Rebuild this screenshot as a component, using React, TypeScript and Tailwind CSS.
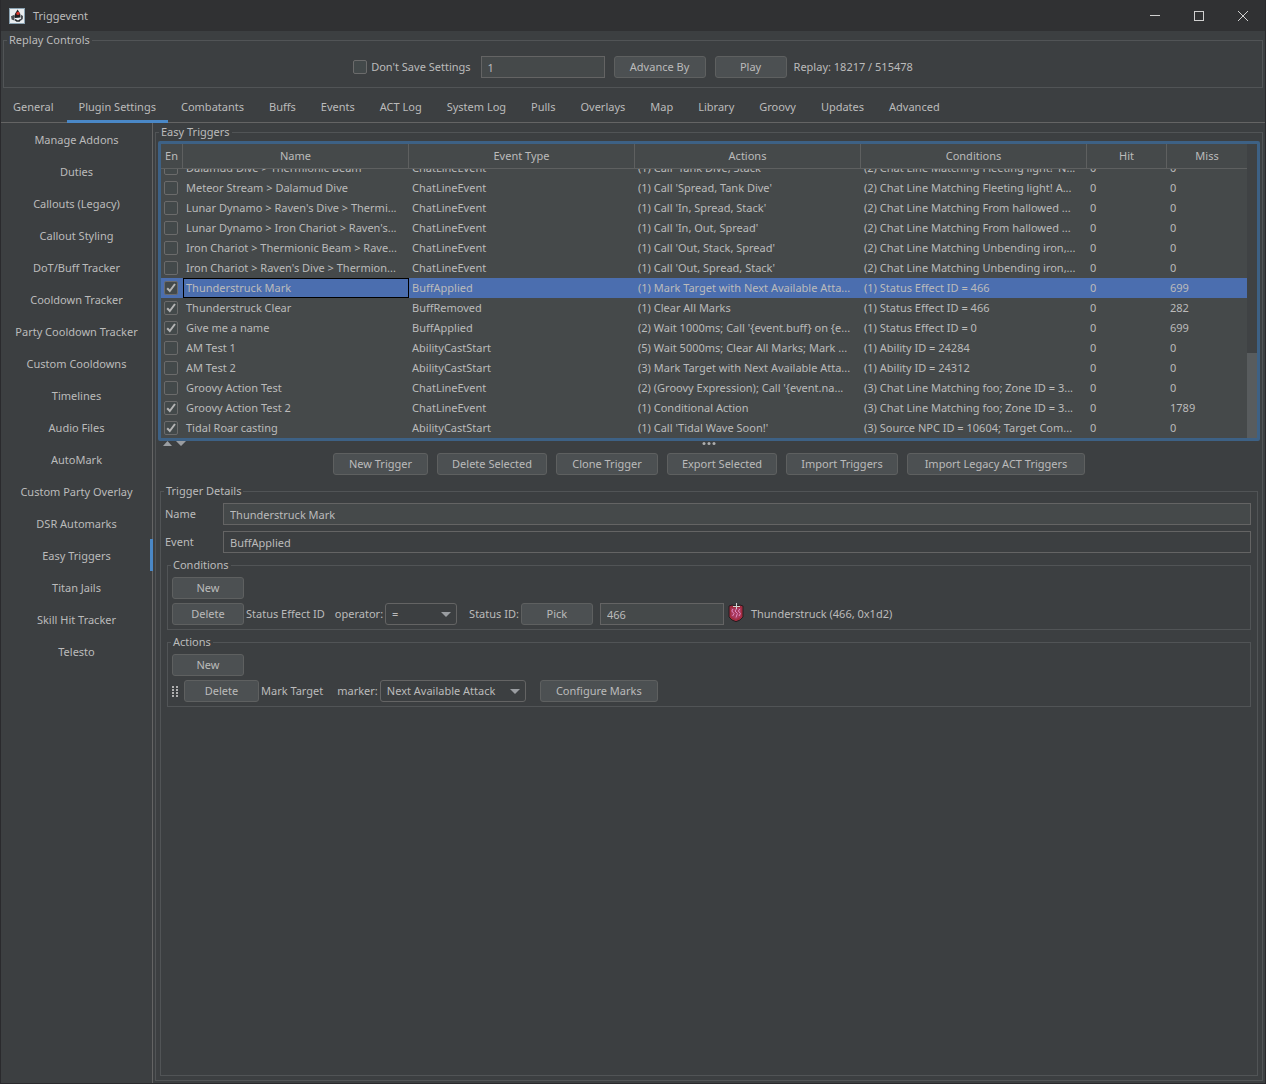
import { useState } from "react";
import type { ReactNode } from "react";
import clsx from "clsx";

interface Trigger {
  enabled: boolean;
  name: string;
  event: string;
  actions: string;
  conditions: string;
  hit: number;
  miss: number;
}

const TABS = [
  "General",
  "Plugin Settings",
  "Combatants",
  "Buffs",
  "Events",
  "ACT Log",
  "System Log",
  "Pulls",
  "Overlays",
  "Map",
  "Library",
  "Groovy",
  "Updates",
  "Advanced",
];

const PAGES = [
  "Manage Addons",
  "Duties",
  "Callouts (Legacy)",
  "Callout Styling",
  "DoT/Buff Tracker",
  "Cooldown Tracker",
  "Party Cooldown Tracker",
  "Custom Cooldowns",
  "Timelines",
  "Audio Files",
  "AutoMark",
  "Custom Party Overlay",
  "DSR Automarks",
  "Easy Triggers",
  "Titan Jails",
  "Skill Hit Tracker",
  "Telesto",
];

const TRIGGERS: Trigger[] = [
  { enabled: false, name: "Dalamud Dive > Thermionic Beam", event: "ChatLineEvent", actions: "(1) Call 'Tank Dive, Stack'", conditions: "(2) Chat Line Matching Fleeting light! 'N...", hit: 0, miss: 0 },
  { enabled: false, name: "Meteor Stream > Dalamud Dive", event: "ChatLineEvent", actions: "(1) Call 'Spread, Tank Dive'", conditions: "(2) Chat Line Matching Fleeting light! A...", hit: 0, miss: 0 },
  { enabled: false, name: "Lunar Dynamo > Raven's Dive > Thermi...", event: "ChatLineEvent", actions: "(1) Call 'In, Spread, Stack'", conditions: "(2) Chat Line Matching From hallowed ...", hit: 0, miss: 0 },
  { enabled: false, name: "Lunar Dynamo > Iron Chariot > Raven's...", event: "ChatLineEvent", actions: "(1) Call 'In, Out, Spread'", conditions: "(2) Chat Line Matching From hallowed ...", hit: 0, miss: 0 },
  { enabled: false, name: "Iron Chariot > Thermionic Beam > Rave...", event: "ChatLineEvent", actions: "(1) Call 'Out, Stack, Spread'", conditions: "(2) Chat Line Matching Unbending iron,...", hit: 0, miss: 0 },
  { enabled: false, name: "Iron Chariot > Raven's Dive > Thermion...", event: "ChatLineEvent", actions: "(1) Call 'Out, Spread, Stack'", conditions: "(2) Chat Line Matching Unbending iron,...", hit: 0, miss: 0 },
  { enabled: true, name: "Thunderstruck Mark", event: "BuffApplied", actions: "(1) Mark Target with Next Available Atta...", conditions: "(1) Status Effect ID = 466", hit: 0, miss: 699 },
  { enabled: true, name: "Thunderstruck Clear", event: "BuffRemoved", actions: "(1) Clear All Marks", conditions: "(1) Status Effect ID = 466", hit: 0, miss: 282 },
  { enabled: true, name: "Give me a name", event: "BuffApplied", actions: "(2) Wait 1000ms; Call '{event.buff} on {e...", conditions: "(1) Status Effect ID = 0", hit: 0, miss: 699 },
  { enabled: false, name: "AM Test 1", event: "AbilityCastStart", actions: "(5) Wait 5000ms; Clear All Marks; Mark ...", conditions: "(1) Ability ID = 24284", hit: 0, miss: 0 },
  { enabled: false, name: "AM Test 2", event: "AbilityCastStart", actions: "(3) Mark Target with Next Available Atta...", conditions: "(1) Ability ID = 24312", hit: 0, miss: 0 },
  { enabled: false, name: "Groovy Action Test", event: "ChatLineEvent", actions: "(2) (Groovy Expression); Call '{event.na...", conditions: "(3) Chat Line Matching foo; Zone ID = 3...", hit: 0, miss: 0 },
  { enabled: true, name: "Groovy Action Test 2", event: "ChatLineEvent", actions: "(1) Conditional Action", conditions: "(3) Chat Line Matching foo; Zone ID = 3...", hit: 0, miss: 1789 },
  { enabled: true, name: "Tidal Roar casting", event: "AbilityCastStart", actions: "(1) Call 'Tidal Wave Soon!'", conditions: "(3) Source NPC ID = 10604; Target Com...", hit: 0, miss: 0 },
];

function Group({ title, className, children }: { title: string; className?: string; children: ReactNode }) {
  return (
    <fieldset className={clsx("min-w-0 border border-[#515456]", className)}>
      <legend className="ml-[3px] px-0.5">{title}</legend>
      {children}
    </fieldset>
  );
}

function Button({ className, children }: { className?: string; children: ReactNode }) {
  return (
    <button
      type="button"
      className={clsx(
        "h-[22px] shrink-0 rounded-[3px] border border-[#5e6060] bg-[#4c5052] whitespace-nowrap",
        className,
      )}
    >
      {children}
    </button>
  );
}

function CheckBox({ label, id, defaultChecked }: { label?: string; id?: string; defaultChecked?: boolean }) {
  return (
    <span className="relative block size-3.5 shrink-0">
      <input
        type="checkbox"
        id={id}
        aria-label={label}
        defaultChecked={defaultChecked}
        className="peer block size-3.5 appearance-none rounded-[2px] border border-[#6b6b6b] bg-[#43494a]"
      />
      <svg
        viewBox="0 0 14 14"
        className="pointer-events-none absolute inset-0 hidden size-3.5 peer-checked:block"
        fill="none"
        stroke="#b4b4b4"
        strokeWidth="2"
      >
        <path d="M3.2 7.2 L5.8 10 L11 3" />
      </svg>
    </span>
  );
}

function Select({ id, value, className }: { id: string; value: string; className: string }) {
  return (
    <span className={clsx("relative block h-[22px] shrink-0", className)}>
      <select
        id={id}
        defaultValue={value}
        className="block h-full w-full appearance-none rounded-[3px] border border-[#646464] bg-[#3c3f41] pl-1.5"
      >
        <option>{value}</option>
      </select>
      <svg viewBox="0 0 10 5" className="pointer-events-none absolute top-[9px] right-1.5 h-[5px] w-2.5" fill="#9a9da1">
        <path d="M0 0 H10 L5 5 Z" />
      </svg>
    </span>
  );
}

function AppIcon() {
  return (
    <svg viewBox="0 0 16 16" className="size-4">
      <rect width="16" height="16" fill="#e9edf0" />
      <rect x="0.5" y="0.5" width="15" height="15" fill="none" stroke="#8ba3b3" />
      <path d="M8.6 1.6 L6.2 5.5 L5.2 9 L6 10 L11.5 9.4 L11.3 6 Z" fill="#1f1f22" />
      <path d="M2 8.2 L5.4 6.8 V12.6 L2.6 11.6 Z M12 6.8 L14 8 L13.8 11 L12 12.4 Z" fill="#4b5055" />
      <path d="M5.6 12.2 L7.6 13.8 H10.6 L12 12 L11.6 10.8 L9 12.4 L6.4 11 Z" fill="#26282b" />
      <circle cx="9" cy="5.4" r="1.7" fill="#d8352b" />
    </svg>
  );
}

function StatusIcon() {
  return (
    <svg viewBox="0 0 16 20" className="h-5 w-4 shrink-0">
      <path d="M1 3 L4 2 L8 3 L12 2 L15 3 V14 L12 17 L8 18.7 L4 17 L1 14 Z" fill="#a22c3f" stroke="#251d20" />
      <path d="M3 5 H13 V13.5 L8 16.5 L3 13.5 Z" fill="#a8385c" />
      <path
        d="M5 6 L3.8 8 L6 10.5 L4.6 13 M8.4 6 L7 8 L9.4 10.5 L8 14.5 M11.8 6 L10.4 8 L12.4 10.5 L11 13"
        fill="none"
        stroke="#e08cc4"
        strokeWidth="1"
      />
      <path d="M8.5 0 V6 M5 3.5 H12" stroke="#d2d2d2" strokeWidth="1" />
    </svg>
  );
}

function TitleBar() {
  return (
    <header className="flex h-[31px] items-center bg-[#303133] pt-px pl-2">
      <AppIcon />
      <h1 className="ml-2 flex-1">Triggevent</h1>
      <button type="button" aria-label="Minimize" className="grid h-full w-11 place-items-center">
        <svg viewBox="0 0 10 10" className="size-2.5" stroke="#d0d0d0" fill="none">
          <path d="M0 4.5 H10" />
        </svg>
      </button>
      <button type="button" aria-label="Maximize" className="grid h-full w-11 place-items-center">
        <svg viewBox="0 0 10 10" className="size-2.5" stroke="#d0d0d0" fill="none">
          <rect x="0.5" y="0.5" width="9" height="9" />
        </svg>
      </button>
      <button type="button" aria-label="Close" className="grid h-full w-11 place-items-center">
        <svg viewBox="0 0 10 10" className="size-2.5" stroke="#d0d0d0" fill="none">
          <path d="M0 0 L10 10 M10 0 L0 10" />
        </svg>
      </button>
    </header>
  );
}

function ReplayControls() {
  return (
    <Group title="Replay Controls" className="mx-0.5 mt-px">
      <div className="flex items-center justify-center pt-2 pb-[9px]">
        <CheckBox id="dont-save" />
        <label htmlFor="dont-save" className="ml-1">
          Don't Save Settings
        </label>
        <input
          aria-label="Advance amount"
          defaultValue="1"
          className="ml-2.5 h-[22px] w-[124px] border border-[#646464] bg-[#45494a] px-1.5"
        />
        <Button className="ml-[9px] w-[92px]">Advance By</Button>
        <Button className="ml-[9px] w-[72px]">Play</Button>
        <span className="ml-[7px]">Replay: 18217 / 515478</span>
      </div>
    </Group>
  );
}

const HEADINGS = ["En", "Name", "Event Type", "Actions", "Conditions", "Hit", "Miss"];

function TriggerTable() {
  const [selected, setSelected] = useState(6);

  return (
    <div className="mx-0.5 mt-px flex rounded-[2px] border-[3px] border-[#3d6185] bg-[#45494a]">
      <div className="min-w-0 flex-1">
        <table className="w-full table-fixed border-separate border-spacing-0">
          <colgroup>
            <col className="w-[22px]" />
            <col />
            <col />
            <col />
            <col />
            <col className="w-20" />
            <col className="w-20" />
          </colgroup>
          <thead>
            <tr className="h-[25px]">
              {HEADINGS.map((h) => (
                <th
                  key={h}
                  className="overflow-hidden border-r border-b border-[#5e6060] p-0 font-normal whitespace-nowrap last:border-r-0"
                >
                  {h}
                </th>
              ))}
            </tr>
          </thead>
          <tbody>
            {TRIGGERS.map((t, i) => {
              // the top row is partly scrolled under the header
              const box = clsx("flex items-end overflow-hidden whitespace-nowrap", i === 0 ? "h-[9px]" : "h-5");
              const line = "block h-5 flex-none leading-5";
              return (
                <tr
                  key={i}
                  onClick={() => setSelected(i)}
                  className={i === selected ? "bg-[#4b6eaf]" : undefined}
                >
                  <td className="p-0">
                    <div className={clsx(box, "pl-[3px]")}>
                      <span className="flex h-5 items-center">
                        <CheckBox label={`Enable ${t.name}`} defaultChecked={t.enabled} />
                      </span>
                    </div>
                  </td>
                  <td className="p-0">
                    <div className={clsx(box, "pl-[3px]", i === selected && "ring-1 ring-black ring-inset")}>
                      <span className={line}>{t.name}</span>
                    </div>
                  </td>
                  {[t.event, t.actions, t.conditions, t.hit, t.miss].map((value, c) => (
                    <td key={c} className="p-0">
                      <div className={clsx(box, "pl-[3px]")}>
                        <span className={line}>{value}</span>
                      </div>
                    </td>
                  ))}
                </tr>
              );
            })}
          </tbody>
        </table>
      </div>
      <div className="flex w-2.5 flex-col justify-end bg-[#3f4244]">
        <div className="h-[85px] bg-[#585c5e]" />
      </div>
    </div>
  );
}

function SplitHandle() {
  return (
    <div className="grid h-3 grid-cols-3 items-start px-1.5">
      <svg viewBox="0 0 24 6" className="h-1.5 w-6" fill="#9a9da1">
        <path d="M1 5 H10 L5.500 0 Z M14 0 H24 L19 5 Z" />
      </svg>
      <svg viewBox="0 0 14 6" className="h-1.5 w-3.5 justify-self-center" fill="#adadad">
        <circle cx="2" cy="2.500" r="1.500" />
        <circle cx="7" cy="2.500" r="1.500" />
        <circle cx="12" cy="2.500" r="1.500" />
      </svg>
    </div>
  );
}

function TriggerDetails() {
  return (
    <Group title="Trigger Details" className="mx-1 mt-2 mb-1 flex-1">
      <div className="flex flex-col gap-1.5 px-1 pt-1 pr-1.5">
        <div className="flex items-center">
          <label htmlFor="trigger-name" className="w-[58px]">
            Name
          </label>
          <input
            id="trigger-name"
            defaultValue="Thunderstruck Mark"
            className="h-[22px] min-w-0 flex-1 border border-[#646464] bg-[#45494a] px-1.5"
          />
        </div>
        <div className="flex items-center">
          <label htmlFor="trigger-event" className="w-[58px]">
            Event
          </label>
          <input
            id="trigger-event"
            readOnly
            defaultValue="BuffApplied"
            className="h-[22px] min-w-0 flex-1 border border-[#646464] bg-[#3c3f41] px-1.5"
          />
        </div>
      </div>

      <Group title="Conditions" className="mx-1.5 mt-1">
        <div className="flex flex-col gap-1 p-1">
          <Button className="w-[72px]">New</Button>
          <div className="flex items-center">
            <Button className="w-[72px]">Delete</Button>
            <span className="ml-0.5">Status Effect ID</span>
            <label htmlFor="operator" className="mr-0.5 ml-2.5">
              operator:
            </label>
            <Select id="operator" value="=" className="w-[72px]" />
            <label htmlFor="status-id" className="mr-0.5 ml-3">
              Status ID:
            </label>
            <Button className="w-[72px]">Pick</Button>
            <input
              id="status-id"
              defaultValue="466"
              className="ml-[7px] h-[22px] w-[124px] border border-[#646464] bg-[#45494a] px-1.5"
            />
            <span className="ml-1 flex h-[22px] items-start">
              <StatusIcon />
            </span>
            <span className="ml-[7px]">Thunderstruck (466, 0x1d2)</span>
          </div>
        </div>
      </Group>

      <Group title="Actions" className="mx-1.5 mt-1">
        <div className="flex flex-col gap-1 p-1">
          <Button className="w-[72px]">New</Button>
          <div className="flex items-center">
            <svg viewBox="0 0 6 14" className="mr-1.5 h-3.5 w-1.5" fill="#b0b0b0">
              {[2, 5, 8, 11].map((y) => (
                <path key={y} d={`M0 ${y} h2 v2 h-2 Z M4 ${y} h2 v2 h-2 Z`} />
              ))}
            </svg>
            <Button className="w-[75px]">Delete</Button>
            <span className="ml-0.5">Mark Target</span>
            <label htmlFor="marker" className="mr-0.5 ml-3.5">
              marker:
            </label>
            <Select id="marker" value="Next Available Attack" className="w-[146px]" />
            <Button className="ml-3.5 w-[118px]">Configure Marks</Button>
          </div>
        </div>
      </Group>
    </Group>
  );
}

export default function App() {
  const [tab, setTab] = useState("Plugin Settings");
  const [page, setPage] = useState("Easy Triggers");

  return (
    <div className="flex min-h-screen flex-col border-x border-b border-[#2a2a2d] bg-[#3c3f41] font-['Noto_Sans',sans-serif] text-[11px] leading-4 text-[#bbbbbb]">
      <TitleBar />
      <ReplayControls />

      <nav className="flex h-[35px] items-stretch gap-px border-b border-[#646464]">
        {TABS.map((t) => (
          <button
            key={t}
            type="button"
            onClick={() => setTab(t)}
            className={clsx(
              "-mb-px border-b-[3px] px-3 pt-1.5 whitespace-nowrap",
              t === tab ? "border-[#4a88c7]" : "border-transparent",
            )}
          >
            {t}
          </button>
        ))}
      </nav>

      <div className="flex flex-1">
        <nav className="flex w-[152px] shrink-0 flex-col border-r border-[#646464]">
          {PAGES.map((p) => (
            <button
              key={p}
              type="button"
              onClick={() => setPage(p)}
              className={clsx(
                "-mr-px h-8 border-r-[3px] pt-0.5 pl-0.5 whitespace-nowrap",
                p === page ? "border-[#4a88c7]" : "border-transparent",
              )}
            >
              {p}
            </button>
          ))}
        </nav>

        <main className="flex min-w-0 flex-1 flex-col px-0.5 pt-px pb-0.5">
          <Group title="Easy Triggers" className="flex flex-1 flex-col">
            <TriggerTable />
            <SplitHandle />
            <div className="flex justify-center gap-[9px]">
              <Button className="w-[95px]">New Trigger</Button>
              <Button className="w-[110px]">Delete Selected</Button>
              <Button className="w-[102px]">Clone Trigger</Button>
              <Button className="w-[110px]">Export Selected</Button>
              <Button className="w-[112px]">Import Triggers</Button>
              <Button className="w-[178px]">Import Legacy ACT Triggers</Button>
            </div>
            <TriggerDetails />
          </Group>
        </main>
      </div>
    </div>
  );
}
